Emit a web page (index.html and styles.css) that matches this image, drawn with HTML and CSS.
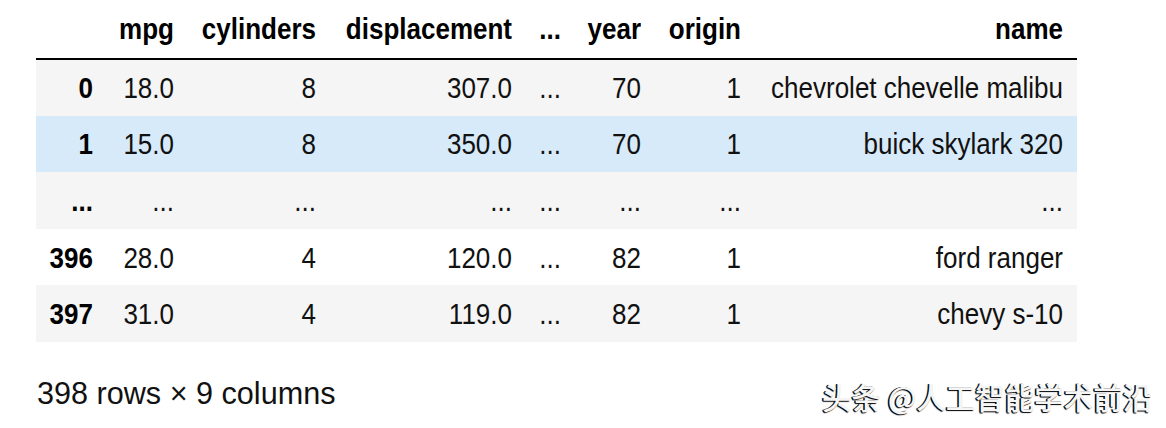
FILE: index.html
```html
<!DOCTYPE html>
<html lang="en">
<head>
<meta charset="utf-8">
<title>DataFrame</title>
<link rel="stylesheet" href="styles.css">
</head>
<body>
<div class="output">
  <table class="dataframe">
    <colgroup>
      <col class="c-idx"><col class="c-mpg"><col class="c-cyl"><col class="c-disp"><col class="c-dots"><col class="c-year"><col class="c-origin"><col class="c-name">
    </colgroup>
    <thead>
      <tr>
        <th></th><th><span class="t">mpg</span></th><th><span class="t">cylinders</span></th><th><span class="t">displacement</span></th><th><span class="t">...</span></th><th><span class="t">year</span></th><th><span class="t">origin</span></th><th><span class="t">name</span></th>
      </tr>
    </thead>
    <tbody>
      <tr class="odd">
        <th><span class="t">0</span></th><td><span class="t">18.0</span></td><td><span class="t">8</span></td><td><span class="t">307.0</span></td><td><span class="t">...</span></td><td><span class="t">70</span></td><td><span class="t">1</span></td><td><span class="t">chevrolet chevelle malibu</span></td>
      </tr>
      <tr class="hover">
        <th><span class="t">1</span></th><td><span class="t">15.0</span></td><td><span class="t">8</span></td><td><span class="t">350.0</span></td><td><span class="t">...</span></td><td><span class="t">70</span></td><td><span class="t">1</span></td><td><span class="t">buick skylark 320</span></td>
      </tr>
      <tr class="odd">
        <th><span class="t">...</span></th><td><span class="t">...</span></td><td><span class="t">...</span></td><td><span class="t">...</span></td><td><span class="t">...</span></td><td><span class="t">...</span></td><td><span class="t">...</span></td><td><span class="t">...</span></td>
      </tr>
      <tr>
        <th><span class="t">396</span></th><td><span class="t">28.0</span></td><td><span class="t">4</span></td><td><span class="t">120.0</span></td><td><span class="t">...</span></td><td><span class="t">82</span></td><td><span class="t">1</span></td><td><span class="t">ford ranger</span></td>
      </tr>
      <tr class="odd">
        <th><span class="t">397</span></th><td><span class="t">31.0</span></td><td><span class="t">4</span></td><td><span class="t">119.0</span></td><td><span class="t">...</span></td><td><span class="t">82</span></td><td><span class="t">1</span></td><td><span class="t">chevy s-10</span></td>
      </tr>
    </tbody>
  </table>
  <p class="shape">398 rows × 9 columns</p>
</div>
<div class="watermark">头条 @人工智能学术前沿</div>
</body>
</html>
```

FILE: styles.css
```css
html, body {
  margin: 0;
  padding: 0;
  background: #ffffff;
}

body {
  position: relative;
  width: 1166px;
  height: 428px;
  overflow: hidden;
  font-family: "Liberation Sans", Arial, sans-serif;
  color: #111;
}

.output {
  padding-left: 36px;
}

.dataframe {
  border-collapse: collapse;
  table-layout: fixed;
  width: 1041px;
  font-size: 26px;
}

.c-idx { width: 71px; }
.c-mpg { width: 81px; }
.c-cyl { width: 142px; }
.c-disp { width: 196px; }
.c-dots { width: 49px; }
.c-year { width: 80px; }
.c-origin { width: 100px; }
.c-name { width: 322px; }

.dataframe th,
.dataframe td {
  text-align: right;
  padding: 0 14px 0 0;
  white-space: nowrap;
  line-height: 30px;
}

.dataframe .t {
  display: inline-block;
  transform: scaleY(1.1);
  transform-origin: 50% 55%;
}

.dataframe thead th {
  height: 58px;
  font-weight: bold;
  color: #000;
  vertical-align: middle;
}

.dataframe thead tr {
  border-bottom: 2px solid #000;
}

.dataframe tbody tr {
  height: 56.6px;
}

.dataframe tbody th,
.dataframe tbody td {
  padding-top: 1px;
}

.dataframe tbody th {
  font-weight: bold;
  color: #000;
}

.dataframe tbody td {
  font-weight: normal;
}

.dataframe tr.odd {
  background: #f5f5f5;
}

.dataframe tr.hover {
  background: #d7eaf9;
}

.shape {
  margin: 33px 0 0 1px;
  font-size: 30.6px;
  line-height: 36px;
  color: #111;
}

.watermark {
  position: absolute;
  left: 822px;
  top: 379px;
  font-family: "Noto Sans CJK SC", "Liberation Sans", sans-serif;
  font-size: 29.5px;
  font-weight: 500;
  line-height: 34px;
  color: #f5f5f5;
  text-shadow: -1px 1px 1px #000, -1.5px 0 0 #222;
  white-space: nowrap;
}
```
